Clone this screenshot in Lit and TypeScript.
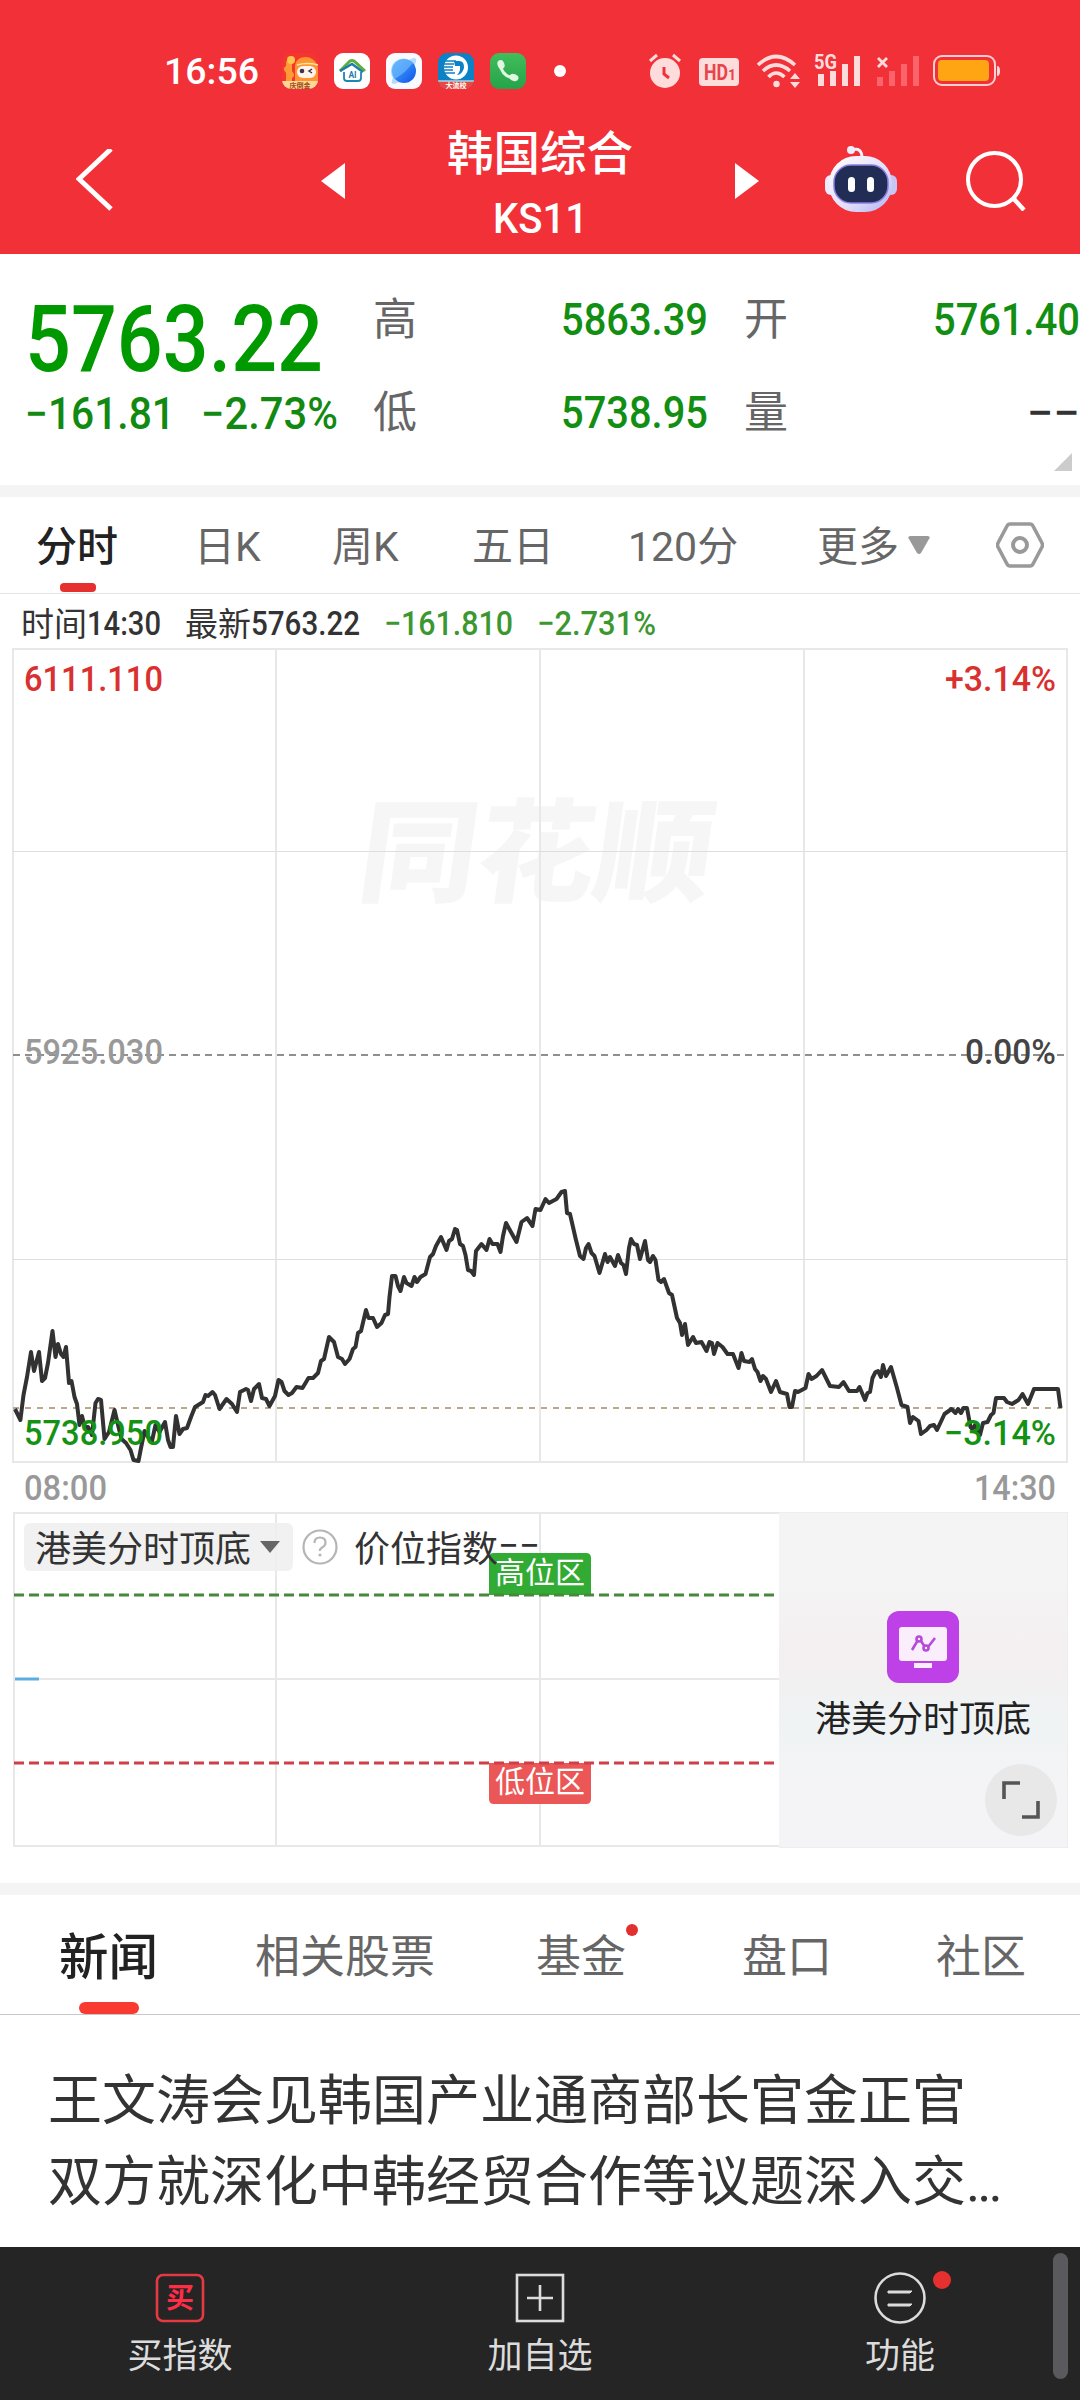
import { LitElement, css, html, svg } from "lit";
import { customElement, state } from "lit/decorators.js";
import { classMap } from "lit/directives/class-map.js";

// intraday price line, in chart coordinates
const PRICE_LINE = `15,1409 20.4,1420 23.5,1395 27,1377 31,1352 34,1371 39,1352 42,1381 45,1378 48,1363
52.5,1331 55.5,1357 58,1344 61,1354 63.5,1357 66,1347 69,1383 71.5,1381 74.5,1397 77,1404 79.5,1425
82,1416 85,1428 88,1427 92,1435 95.5,1403 98,1399 101,1400 104.5,1439 109,1432 114.5,1410 119,1429
121.5,1439 126,1443 130.5,1450 133.5,1460 138.5,1461 141,1448 144.5,1431 148,1437 152,1441 155.5,1425
159.5,1432 165,1422 168,1440 170.5,1447 173,1447 176,1416 179.5,1434 183,1429 187,1428 191,1417
195,1407 203,1402 205.5,1395 208,1396 212.5,1392 215,1395 219.5,1409 226.5,1399 232,1404 237,1412
240,1392 246,1389 248,1390 251,1401 254,1389 259,1384 262,1398 266,1399 269.5,1406 275,1396
278.5,1380 281.5,1382 284.5,1391 288.5,1395 292,1393 296.5,1387 302.5,1388 308.5,1378 313,1378
318,1373 321,1361 324,1359 329,1337 334,1342 338,1357 342,1359 345,1364 349.5,1359 353,1349
355.5,1347 358,1333 361,1331 366,1310 368.5,1318 373,1318 377,1327 381.5,1323 385,1315 388,1314
389.5,1297 392,1276 395.5,1276 398,1286 400.5,1291 404,1277 406.5,1283 411.5,1286 414.5,1277
417,1282 420.5,1277 425.5,1274 430,1257 433,1254 436,1246 441,1237 446.5,1250 449,1241 452,1239
455,1229 457,1230 460,1244 463,1246 465.5,1255 468,1270 471,1271 474,1275 476,1251 481.5,1244
486.5,1250 489.5,1239 492.5,1244 497.5,1244 500.5,1252 503,1236 506,1223 511.5,1233 516.5,1242
521.5,1222 527,1218 532.5,1226 535.5,1209 540.5,1210 545.5,1199 549,1203 556.5,1199 561.5,1192
565,1191 567,1213 570,1214 575.5,1238 580,1256 583.5,1259 586,1248 588.5,1244 591.5,1253 594.5,1256
599.5,1273 605,1254 607.5,1262 610,1257 615,1266 618,1255 621,1263 623.5,1265 626,1274 629,1248
631,1239 634,1244 637,1245 640,1259 645,1241 648,1260 650,1262 653,1256 655.5,1260 658.5,1280
661,1282 664,1279 669,1293 672,1295 677,1318 680,1323 682,1335 685,1324 688,1345 693,1337 696,1343
701.5,1342 706.5,1351 709.5,1342 712,1343 714,1354 717.5,1343 722.5,1347 727.5,1354 733,1354
738.5,1368 741.5,1353 744,1361 749.5,1362 752,1359 755,1369 757.5,1372 760.5,1381 763,1376 766,1379
771,1392 776,1381 780,1392 787,1394 789.5,1407 792,1407 795,1391 798,1392 805.5,1388 808.5,1374
811.5,1379 816.5,1376 822,1370 830,1386 839,1387 843.5,1382 849,1391 857,1391 859.5,1387 865,1400
867.5,1393 870,1392 872.5,1378 875.5,1372 878,1371 881,1377 883,1365 886,1376 891,1367 897,1388
901.5,1405 907.5,1407 910,1423 913,1417 918.5,1421 921,1434 926.5,1430 930,1426 934,1425 937,1430
944.5,1414 951.5,1409 955.5,1413 958,1409 961,1413 963.5,1408 967,1408 970.5,1427 972.5,1429
975,1425 980,1435 983,1423 987.5,1422 991,1415 993.5,1413 996,1398 1004,1398 1007,1402 1012,1404
1018.5,1400 1022.5,1394 1028,1404 1034,1389 1058,1389 1060.5,1408`;

// condensed number: glyphs are squeezed to the given width, caps sit in the middle of the box
const num = (text: string, width: number, size: number, cls = "") => html`
  <svg class="num ${cls}" width=${width} height=${size}>
    <text y=${size * 0.855} font-size=${size} textLength=${width} lengthAdjust="spacingAndGlyphs">${text}</text>
  </svg>
`;

const chartText = (text: string, x: number, y: number, width: number, cls: string) => svg`
  <text class="label ${cls}" x=${x} y=${y} font-size="35" textLength=${width} lengthAdjust="spacingAndGlyphs">${text}</text>
`;

@customElement("status-bar")
export class StatusBar extends LitElement {
  static styles = css`
    :host {
      display: flex;
      align-items: center;
      height: 36px;
      padding: 53px 0 0 164px;
      font-family: Roboto, "Noto Sans CJK SC", sans-serif;
    }
    svg {
      display: block;
      flex: none;
    }
    .time {
      fill: #fff;
      margin-right: 22px;
      font-weight: 500;
    }
    .apps {
      display: flex;
      gap: 16px;
    }
    .dot {
      width: 12px;
      height: 12px;
      border-radius: 50%;
      background: #fff;
      margin: 0 83px 0 28px;
    }
    .system {
      display: flex;
      align-items: center;
      fill: #ffdcdc;
    }
    .alarm {
      margin-right: 18px;
    }
    .hd {
      margin-right: 17px;
    }
    .wifi,
    .signal {
      margin-right: 14px;
    }
    .nosim {
      margin-right: 13px;
    }
  `;

  render() {
    return html`
      <svg class="time" width="96" height="38">
        <text y="32" font-size="37" textLength="95" lengthAdjust="spacingAndGlyphs">16:56</text>
      </svg>
      <div class="apps">
        <svg width="36" height="36" viewBox="0 0 36 36">
          <defs>
            <clipPath id="round"><rect width="36" height="36" rx="9" /></clipPath>
          </defs>
          <g clip-path="url(#round)">
            <rect width="36" height="36" fill="#f4362f" />
            <path d="M7 10v22M5 16l4 6" stroke="#ff9b36" stroke-width="6" stroke-linecap="round" />
            <circle cx="9" cy="7" r="4" fill="#ffc64f" />
            <path d="M13 32V14C13 7 18 4 24 4s12 6 12 12v16Z" fill="#ff9433" />
            <path d="M15 12q10-3 21 0" stroke="#ffe3a0" stroke-width="1.6" fill="none" />
            <rect x="15" y="13" width="19" height="12" rx="6" fill="#fff4ea" />
            <circle cx="20" cy="18" r="2.3" fill="#3b3450" />
            <path d="m30 16-3 2 3 2" stroke="#3b3450" stroke-width="1.5" fill="none" />
            <path d="M0 28h36v8H0Z" fill="#ffd698" />
            <text x="18" y="34.5" font-size="7" font-weight="700" fill="#9b4b16" text-anchor="middle">庆倒金</text>
          </g>
        </svg>
        <svg width="36" height="36" viewBox="0 0 36 36">
          <rect width="36" height="36" rx="9" fill="#fff" />
          <path d="M6 18 16 8q2-1 4 0l11 10" stroke="#5fae3c" stroke-width="3" fill="none" />
          <path d="M6 18 18 11l11 8" stroke="#1c7cae" stroke-width="2.4" fill="none" />
          <path d="M10 19v6q0 3 3 3h11q3 0 3-3v-6" stroke="#1c86b4" stroke-width="1.8" fill="none" />
          <text x="18.5" y="25" font-size="8.5" font-weight="700" fill="#1c7cae" text-anchor="middle">AI</text>
        </svg>
        <svg width="36" height="36" viewBox="0 0 36 36">
          <defs>
            <linearGradient id="planet" x1="0" y1="0" x2="1" y2="1">
              <stop offset="0" stop-color="#52b2ff" />
              <stop offset="1" stop-color="#0b52e8" />
            </linearGradient>
          </defs>
          <rect width="36" height="36" rx="9" fill="#f7faff" />
          <ellipse cx="18" cy="18" rx="17" ry="5" fill="#b5d9ff" transform="rotate(-47 18 18)" />
          <circle cx="18" cy="18" r="12" fill="url(#planet)" />
          <path d="M27 10C22 16 15 23 8 26A12 12 0 0 1 27 10Z" fill="#70bcff" opacity=".65" />
        </svg>
        <svg width="36" height="36" viewBox="0 0 36 36">
          <defs>
            <clipPath id="round2"><rect width="36" height="36" rx="9" /></clipPath>
          </defs>
          <g clip-path="url(#round2)">
            <rect width="36" height="36" fill="#0b82c6" />
            <circle cx="18" cy="14.500" r="12" fill="#fff" />
            <path d="M5 8h13M5 11h11M5 14h10M5 17h10M5 20h12" stroke="#0b82c6" stroke-width="1.300" />
            <path d="M16 8h5c4 0 5 3 5 6s-3 8-7 8c2-2 3-4 3-6v-3h-5Z" fill="#0b82c6" />
            <path d="M0 28.500h36V36H0Z" fill="#e84a40" />
            <path d="M0 28h36" stroke="#fff" stroke-width="1" />
            <text x="18" y="35" font-size="7" font-weight="700" fill="#fff" text-anchor="middle">大流校</text>
          </g>
        </svg>
        <svg width="36" height="36" viewBox="0 0 36 36">
          <defs>
            <linearGradient id="call" x1="0" y1="0" x2="0" y2="1">
              <stop offset="0" stop-color="#42bd5b" />
              <stop offset="1" stop-color="#25a34a" />
            </linearGradient>
          </defs>
          <rect width="36" height="36" rx="9" fill="url(#call)" />
          <path d="M10 11q2 13 15 14" fill="none" stroke="#dff7e3" stroke-width="3" />
          <ellipse cx="11" cy="11.500" rx="3.400" ry="4.600" fill="#dff7e3" transform="rotate(-20 11 11.500)" />
          <ellipse cx="24" cy="24.500" rx="4.600" ry="3.400" fill="#dff7e3" transform="rotate(20 24 24.500)" />
        </svg>
      </div>
      <div class="dot"></div>
      <div class="system">
        <svg class="alarm" width="32" height="36" viewBox="0 0 32 36">
          <circle cx="16" cy="20" r="15" />
          <path d="m1 8 7-6M31 8l-7-6" stroke="#ffdcdc" stroke-width="3" />
          <path d="M15 14v7l5 4" stroke="#f23038" stroke-width="3" fill="none" />
        </svg>
        <svg class="hd" width="40" height="36" viewBox="0 0 40 36">
          <rect y="5" width="40" height="28" rx="4" />
          <text x="5" y="27" font-size="22" font-weight="700" fill="#e8434a" textLength="24" lengthAdjust="spacingAndGlyphs">HD</text>
          <text x="29" y="27" font-size="14" font-weight="700" fill="#e8434a">1</text>
        </svg>
        <svg class="wifi" width="44" height="36" viewBox="0 0 44 36">
          <g fill="none" stroke="#ffdcdc" stroke-width="3.600">
            <path d="M2 12Q20-5 39 12" />
            <path d="M7 18Q20 6 34 18" />
            <path d="M12.500 24Q20 16 28.500 24" />
          </g>
          <circle cx="20.500" cy="31" r="3.200" />
          <path d="m39 20 5 6H34ZM39 35l5-6H34Z" />
        </svg>
        <svg class="signal" width="48" height="36" viewBox="0 0 48 36">
          <text y="16" font-size="20" font-weight="700" textLength="23" lengthAdjust="spacingAndGlyphs">5G</text>
          <path d="M4 21h6v12H4ZM16 18h6v15h-6ZM28 11h6v22h-6ZM40 3h6v30h-6Z" />
        </svg>
        <svg class="nosim" width="44" height="36" viewBox="0 0 44 36">
          <path d="m2 5 9 9m0-9-9 9" stroke="#ffdcdc" stroke-width="2.800" />
          <path d="M1 24h6v9H1ZM13 18h6v15h-6ZM25 11h6v22h-6ZM37 3h6v30h-6Z" fill="#fa646a" />
        </svg>
        <svg width="68" height="36" viewBox="0 0 68 36">
          <rect x="1" y="3" width="61" height="29" rx="8" fill="none" stroke="#ffcfcf" stroke-width="2" />
          <rect x="5" y="7" width="51" height="21" rx="4" fill="#ffa514" />
          <path d="M64 13q3 0 3 5t-3 5Z" />
        </svg>
      </div>
    `;
  }
}

@customElement("price-chart")
export class PriceChart extends LitElement {
  static styles = css`
    :host {
      display: block;
      font-family: Roboto, "Noto Sans CJK SC", sans-serif;
    }
    svg {
      display: block;
    }
    .grid {
      fill: none;
      stroke: #e8e8e8;
      stroke-width: 2;
    }
    .thin {
      stroke: #dedede;
      stroke-width: 1;
    }
    .mark {
      font: 900 112px "Noto Sans CJK SC", sans-serif;
      fill: #f6f6f6;
    }
    .base {
      stroke: #8f8f8f;
      stroke-width: 2;
      stroke-dasharray: 7 5;
    }
    .last {
      stroke: #b9a98a;
      stroke-width: 2;
      stroke-dasharray: 6 6;
    }
    .line {
      fill: none;
      stroke: #323232;
      stroke-width: 4;
      stroke-linejoin: round;
    }
    .label {
      font-weight: 500;
    }
    .up {
      fill: #d93030;
    }
    .down {
      fill: #149214;
    }
    .flat {
      fill: #444;
    }
    .muted {
      fill: #999;
    }
  `;

  render() {
    return html`
      <svg width="1080" height="864" viewBox="0 648 1080 864">
        <text class="mark" transform="translate(355 893) skewX(-8)" textLength="353" lengthAdjust="spacingAndGlyphs">
          同花顺
        </text>
        <path class="grid" d="M13 649H1067V1462H13ZM276 649V1462M540 649V1462M804 649V1462" />
        <path class="grid thin" d="M13 851.500H1067M13 1259.500H1067" />
        <path class="base" d="M13 1055H1067" />
        <path class="last" d="M13 1408H1062" />
        <polyline class="line" points=${PRICE_LINE} />
        ${chartText("6111.110", 24, 691, 139, "up")}
        ${chartText("+3.14%", 945, 691, 111, "up")}
        ${chartText("5925.030", 24, 1064, 139, "muted")}
        ${chartText("0.00%", 965, 1064, 91, "flat")}
        ${chartText("5738.950", 24, 1445, 139, "down")}
        ${chartText("−3.14%", 944, 1445, 112, "down")}
        ${chartText("08:00", 24, 1500, 83, "muted")}
        ${chartText("14:30", 974, 1500, 82, "muted")}
      </svg>
    `;
  }
}

@customElement("index-chart")
export class IndexChart extends LitElement {
  static styles = css`
    :host {
      display: grid;
      grid-template-columns: 766px 289px;
      height: 334px;
      margin: 0 12px 0 13px;
      font-family: Roboto, "Noto Sans CJK SC", sans-serif;
    }
    svg {
      display: block;
      flex: none;
    }
    .plot,
    .legend {
      grid-area: 1 / 1;
    }
    .legend {
      display: flex;
      align-items: center;
      height: 48px;
      padding: 11px 0 0 11px;
      color: #333;
      font-size: 36px;
      line-height: 44px;
      z-index: 1;
    }
    .picker {
      display: flex;
      align-items: center;
      gap: 9px;
      box-sizing: border-box;
      width: 269px;
      height: 48px;
      padding-left: 11px;
      border-radius: 6px;
      background: rgba(238, 238, 238, 0.85);
    }
    .zh {
      padding-top: 0.14em;
      white-space: nowrap;
    }
    .help {
      margin: 0 16px 0 9px;
    }
    .grid {
      fill: none;
      stroke: #e8e8e8;
      stroke-width: 2;
    }
    .badge {
      fill: #fff;
      font-size: 30px;
    }
    .promo {
      display: grid;
      grid-template-rows: 98px 72px 36px 1fr;
      justify-items: center;
      border: 1px solid #ededed;
      border-left: 0;
      box-sizing: border-box;
      background: linear-gradient(#f4f4f5 20%, #f4eff0 44%, #eff3f4 62%, #f4f4f6 82%);
    }
    .promo svg.tool {
      grid-row: 2;
    }
    .name {
      grid-row: 3;
      margin-top: 15px;
      font-size: 36px;
      line-height: 44px;
      color: #222;
    }
    .expand {
      grid-row: 4;
      justify-self: end;
      margin: 45px 10px 0 0;
    }
  `;

  render() {
    return html`
      <svg class="plot" width="766" height="336" viewBox="13 1512 766 336">
        <path class="grid" d="M779 1513H14V1846H779M276 1513V1846M540 1513V1846M14 1679H779" />
        <path d="M15 1679H39" stroke="#5caee0" stroke-width="3" />
        <path d="M489 1595V1558q0-5 5-5H586q5 0 5 5V1595Z" fill="#32ab34" />
        <path d="M489 1763H591V1799q0 5-5 5H494q-5 0-5-5Z" fill="#eb5656" />
        <path d="M14 1595H776" stroke="#47893a" stroke-width="3" stroke-dasharray="10 5" />
        <path d="M14 1763H776" stroke="#cf3f48" stroke-width="3" stroke-dasharray="10 5" />
        <text class="badge" x="495" y="1583">高位区</text>
        <text class="badge" x="495" y="1792">低位区</text>
      </svg>
      <div class="legend">
        <div class="picker">
          <span class="zh">港美分时顶底</span>
          <svg width="20" height="12"><path d="M0 0H20L10 12Z" fill="#666" /></svg>
        </div>
        <svg class="help" width="36" height="36" viewBox="0 0 36 36">
          <circle cx="18" cy="18" r="16.500" fill="#fff" stroke="#b5b5b5" stroke-width="2.200" />
          <path d="M12.500 14q0-5.500 5.500-5.500t5.500 5q0 3-3 4.800T18 22" fill="none" stroke="#b5b5b5" stroke-width="2.200" />
          <circle cx="18" cy="26" r="1.600" fill="#b5b5b5" />
        </svg>
        <span class="zh">价位指数</span>
        <svg width="42" height="36" fill="currentColor">
          <text y="29" font-size="36" textLength="42" lengthAdjust="spacingAndGlyphs">−−</text>
        </svg>
      </div>
      <div class="promo">
        <svg class="tool" width="72" height="72" viewBox="0 0 72 72">
          <rect width="72" height="72" rx="12" fill="#bd41e6" />
          <rect x="12" y="16" width="48" height="34" rx="3" fill="#faeefd" />
          <rect x="27" y="52" width="18" height="5" fill="#faeefd" />
          <g fill="none" stroke="#b64bd8" stroke-width="2.600">
            <path d="m25 39 6-10M34 30l4 6M41 36l7-9" />
            <circle cx="32" cy="28" r="2.500" />
            <circle cx="39" cy="37" r="2.500" />
          </g>
        </svg>
        <span class="name">港美分时顶底</span>
        <svg class="expand" width="72" height="72" viewBox="0 0 72 72">
          <circle cx="36" cy="36" r="36" fill="#e8e8e9" />
          <path d="M19 35V19H35M53 37V53H37" fill="none" stroke="#555" stroke-width="3.600" />
        </svg>
      </div>
    `;
  }
}

@customElement("app-root")
export class AppRoot extends LitElement {
  static styles = css`
    :host {
      display: flex;
      flex-direction: column;
      width: 1080px;
      height: 2400px;
      overflow: hidden;
      background: #fff;
      color: #333;
      font-family: Roboto, "Noto Sans CJK SC", sans-serif;
    }
    svg {
      display: block;
      flex: none;
    }
    .num {
      overflow: visible;
      fill: currentColor;
    }
    .zh {
      line-height: 1.2;
      padding-top: 0.08em;
      white-space: nowrap;
    }
    header {
      height: 254px;
      background: #f23038;
      color: #fff;
    }
    .nav {
      display: grid;
      grid-template-columns: 245px 103px 311px 90px 141px 1fr;
      align-items: center;
      height: 130px;
      margin-top: 27px;
      padding-left: 76px;
    }
    .title {
      display: flex;
      flex-direction: column;
      align-items: center;
      width: 186px;
      margin-left: 23px;
      font-size: 46.5px;
      font-weight: 500;
      line-height: 62px;
      white-space: nowrap;
    }
    .title .num {
      margin-top: 11px;
    }
    .quote {
      display: grid;
      grid-template-columns: 345px 170px 165px 174px 1fr;
      grid-template-rows: 93px 93px;
      height: 231px;
      box-sizing: border-box;
      padding: 18px 0 0 28px;
    }
    .main {
      display: flex;
      flex-direction: column;
      grid-row: 1 / 3;
      margin-left: -3px;
      color: #009900;
      font-weight: 500;
    }
    .price {
      margin-top: 20px;
    }
    .change {
      display: flex;
      gap: 26px;
      margin-top: 7px;
      color: #128a12;
    }
    .cell {
      display: flex;
      align-items: center;
      color: #666;
      font-size: 44px;
    }
    .value {
      color: #128f12;
      font-weight: 500;
      justify-content: flex-end;
    }
    .value.empty {
      color: #333;
    }
    .quote .cell.mid {
      justify-content: flex-start;
      padding-left: 18px;
    }
    .quote .cell.second {
      padding-left: 36px;
    }
    .more {
      align-self: flex-end;
      margin: -32px 8px 14px 0;
    }
    .band {
      height: 12px;
      background: #f4f4f4;
    }
    .periods {
      display: grid;
      grid-template-columns: 158px 138px 140px 156px 189px 179px 1fr;
      align-items: center;
      height: 96px;
      padding-left: 36px;
      border-bottom: 1px solid #e4e4e4;
      color: #666;
      font-size: 41px;
    }
    .periods .zh {
      padding-top: 0.12em;
    }
    .tab {
      display: flex;
      align-items: center;
      gap: 9px;
      position: relative;
      white-space: nowrap;
    }
    .tab.active {
      color: #222;
      font-weight: 500;
    }
    .tab.active::after {
      content: "";
      position: absolute;
      left: 24px;
      bottom: -20px;
      width: 36px;
      height: 9px;
      border-radius: 4px;
      background: #e63030;
    }
    .info {
      display: flex;
      align-items: center;
      height: 54px;
      padding: 3px 0 0 21px;
      box-sizing: border-box;
      font-size: 33px;
      font-weight: 500;
    }
    .info .zh {
      padding-top: 0.12em;
      font-weight: 400;
    }
    .info .g {
      color: #3c9730;
      margin-left: 24px;
    }
    .info .latest {
      margin-left: 24px;
    }
    .gap {
      height: 37px;
    }
    .sections {
      display: grid;
      grid-template-columns: 196px 281px 206px 194px 1fr;
      align-items: center;
      height: 115px;
      padding: 4px 0 0 59px;
      border-bottom: 1px solid #c8c8c8;
      color: #666;
      font-size: 45px;
    }
    .sections .active {
      font-size: 49.5px;
    }
    .sections .active::after {
      left: 20px;
      bottom: -26px;
      width: 60px;
      height: 12px;
      border-radius: 6px;
      background: #f83a30;
    }
    .badge::before {
      content: "";
      position: absolute;
      left: 90px;
      top: -4px;
      width: 12px;
      height: 12px;
      border-radius: 50%;
      background: #e03030;
    }
    .news {
      height: 232px;
      box-sizing: border-box;
      padding: 46px 0 0 48px;
      font-size: 54px;
      line-height: 81px;
      white-space: nowrap;
    }
    .dots {
      letter-spacing: -3px;
    }
    .bar {
      display: grid;
      grid-template-columns: repeat(3, 360px);
      flex: 1;
      position: relative;
      background: #252525;
      color: #dcdcdc;
      font-size: 35px;
    }
    .action {
      display: flex;
      flex-direction: column;
      align-items: center;
      gap: 8px;
      padding-top: 24px;
    }
    .thumb {
      position: absolute;
      left: 1053px;
      top: 6px;
      width: 15px;
      height: 126px;
      border-radius: 8px;
      background: #5a595e;
    }
  `;

  @state()
  period = 0;

  @state()
  section = 0;

  periods = ["分时", "日K", "周K", "五日", "120分", "更多"];

  sections = ["新闻", "相关股票", "基金", "盘口", "社区"];

  renderHeader() {
    return html`
      <header>
        <status-bar></status-bar>
        <div class="nav">
          <svg width="40" height="64" viewBox="0 0 40 64">
            <path d="M35 0 3 30l32 30" fill="none" stroke="#fff" stroke-width="5" />
          </svg>
          <svg width="24" height="36"><path d="M24 0V36L0 18Z" fill="#fff" /></svg>
          <div class="title">
            <span>韩国综合</span>
            ${num("KS11", 95, 43)}
          </div>
          <svg width="24" height="36"><path d="M0 0V36L24 18Z" fill="#fff" /></svg>
          <svg width="72" height="72" viewBox="0 0 72 72">
            <defs>
              <linearGradient id="shell" x1="0" y1="0" x2="1" y2="1">
                <stop offset="0" stop-color="#fff" />
                <stop offset=".6" stop-color="#e2dcfa" />
                <stop offset="1" stop-color="#a9b4f2" />
              </linearGradient>
            </defs>
            <path d="M27 5q10-3 10 8" fill="none" stroke="#f1eefb" stroke-width="3" />
            <circle cx="26" cy="5" r="4" fill="#f1eefb" />
            <rect y="30" width="12" height="20" rx="6" fill="#eeeafb" />
            <rect x="60" y="30" width="12" height="20" rx="6" fill="#c6c6f5" />
            <rect x="4" y="11" width="63" height="56" rx="27" fill="url(#shell)" />
            <rect x="9" y="20" width="54" height="38" rx="17" fill="#222d55" stroke="#8b7de0" stroke-width="1.500" />
            <rect x="23" y="32" width="7" height="15" rx="3.500" fill="#fff" />
            <rect x="42" y="32" width="7" height="15" rx="3.500" fill="#fff" />
          </svg>
          <svg width="60" height="60" viewBox="0 0 60 60">
            <circle cx="28.500" cy="28.500" r="26.500" fill="none" stroke="#fff" stroke-width="4" />
            <path d="m47 47 11 12" stroke="#fff" stroke-width="4.500" />
          </svg>
        </div>
      </header>
    `;
  }

  renderQuote() {
    return html`
      <div class="quote">
        <div class="main">
          ${num("5763.22", 298, 92, "price")}
          <div class="change">
            ${num("−161.81", 150, 44)} ${num("−2.73%", 137, 44)}
          </div>
        </div>
        <div class="cell"><span class="zh">高</span></div>
        <div class="cell value mid">${num("5863.39", 147, 44)}</div>
        <div class="cell second"><span class="zh">开</span></div>
        <div class="cell value">${num("5761.40", 147, 44)}</div>
        <div class="cell"><span class="zh">低</span></div>
        <div class="cell value mid">${num("5738.95", 147, 44)}</div>
        <div class="cell second"><span class="zh">量</span></div>
        <div class="cell value empty">${num("−−", 53, 44)}</div>
      </div>
      <svg class="more" width="18" height="18"><path d="M18 0V18H0Z" fill="#ccc" /></svg>
    `;
  }

  renderPeriods() {
    return html`
      <div class="periods">
        ${this.periods.map(
          (name, i) => html`
            <div class="tab ${classMap({ active: i === this.period })}" @click=${() => (this.period = i)}>
              <span class="zh">${name}</span>
              ${name === "更多"
                ? html`<svg width="22" height="18"><path d="M2 0H20q3 1 1 3L13 17q-2 2-4 0L1 3Q-1 1 2 0Z" fill="#999" /></svg>`
                : ""}
            </div>
          `
        )}
        <svg width="48" height="46" viewBox="0 0 48 46">
          <path
            d="M14 2H34q2 0 3 2l9 17q1 2 0 4l-9 17q-1 2-3 2H14q-2 0-3-2L2 25q-1-2 0-4L11 4q1-2 3-2Z"
            fill="none"
            stroke="#999"
            stroke-width="3.600"
          />
          <circle cx="24" cy="23" r="7" fill="none" stroke="#999" stroke-width="4" />
        </svg>
      </div>
    `;
  }

  renderBar() {
    return html`
      <div class="bar">
        <div class="action">
          <svg width="54" height="54" viewBox="0 0 54 54">
            <rect x="4" y="4" width="46" height="46" rx="6" fill="none" stroke="#e63a42" stroke-width="2.600" />
            <text x="27" y="37" font-size="28" font-weight="700" fill="#ff2d45" text-anchor="middle">买</text>
          </svg>
          <span class="zh">买指数</span>
        </div>
        <div class="action">
          <svg width="54" height="54" viewBox="0 0 54 54">
            <rect x="4" y="4" width="46" height="46" fill="none" stroke="#dcdcdc" stroke-width="2.600" />
            <path d="M27 14V40M14 27H40" stroke="#dcdcdc" stroke-width="2.600" />
          </svg>
          <span class="zh">加自选</span>
        </div>
        <div class="action">
          <svg class="num" width="54" height="54" viewBox="0 0 54 54">
            <circle cx="27" cy="27" r="24.500" fill="none" stroke="#dcdcdc" stroke-width="2.600" />
            <path d="M15 20H39L37 22H15ZM15 33H39L37 35H15Z" stroke="#dcdcdc" stroke-width="1" />
            <circle cx="69" cy="9" r="9" fill="#e63030" />
          </svg>
          <span class="zh">功能</span>
        </div>
        <div class="thumb"></div>
      </div>
    `;
  }

  render() {
    return html`
      ${this.renderHeader()} ${this.renderQuote()}
      <div class="band"></div>
      ${this.renderPeriods()}
      <div class="info">
        <span class="zh">时间</span>${num("14:30", 74, 34)}
        <span class="zh latest">最新</span>${num("5763.22", 109, 34)}
        ${num("−161.810", 129, 34, "g")} ${num("−2.731%", 119, 34, "g")}
      </div>
      <price-chart></price-chart>
      <index-chart></index-chart>
      <div class="gap"></div>
      <div class="band"></div>
      <div class="sections">
        ${this.sections.map(
          (name, i) => html`
            <div
              class="tab ${classMap({ active: i === this.section, badge: name === "基金" })}"
              @click=${() => (this.section = i)}
            >
              <span class="zh">${name}</span>
            </div>
          `
        )}
      </div>
      <div class="news">
        <div>王文涛会见韩国产业通商部长官金正官</div>
        <div>双方就深化中韩经贸合作等议题深入交<span class="dots">...</span></div>
      </div>
      ${this.renderBar()}
    `;
  }
}
